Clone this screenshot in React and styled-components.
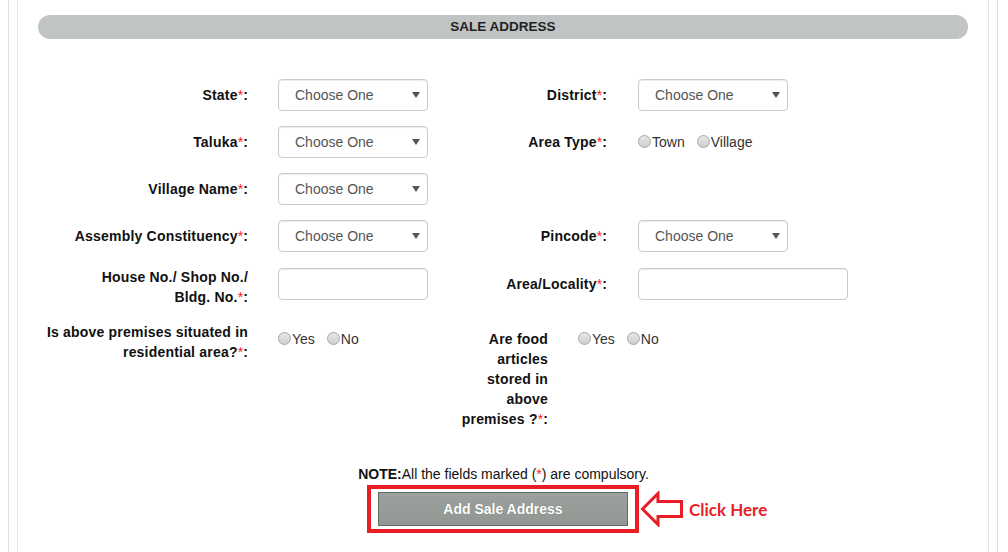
import styled, { createGlobalStyle } from 'styled-components';

const GlobalStyle = createGlobalStyle`
  html, body {
    margin: 0;
    padding: 0;
    background: #ffffff;
    font-family: "Liberation Sans", Arial, sans-serif;
  }
`;

export default function App() {
  return (
    <>
      <GlobalStyle />
      <Outer>
        <Panel>
          <Header>SALE ADDRESS</Header>

          <Form>
            <Row>
              <Field>
                <Label>State<Req>*</Req>:</Label>
                <Choose />
              </Field>
              <Field right>
                <Label right>District<Req>*</Req>:</Label>
                <Choose />
              </Field>
            </Row>

            <Row>
              <Field>
                <Label>Taluka<Req>*</Req>:</Label>
                <Choose />
              </Field>
              <Field right>
                <Label right>Area Type<Req>*</Req>:</Label>
                <Radios names={['Town', 'Village']} group="areatype" />
              </Field>
            </Row>

            <Row>
              <Field>
                <Label>Village Name<Req>*</Req>:</Label>
                <Choose />
              </Field>
            </Row>

            <Row>
              <Field>
                <Label>Assembly Constituency<Req>*</Req>:</Label>
                <Choose />
              </Field>
              <Field right>
                <Label right>Pincode<Req>*</Req>:</Label>
                <Choose />
              </Field>
            </Row>

            <Row top>
              <Field top>
                <Label>House No./ Shop No./<br />Bldg. No.<Req>*</Req>:</Label>
                <TextInput type="text" />
              </Field>
              <Field right>
                <Label right>Area/Locality<Req>*</Req>:</Label>
                <TextInput type="text" wide />
              </Field>
            </Row>

            <Row top>
              <Field top>
                <Label>Is above premises situated in residential area?<Req>*</Req>:</Label>
                <Radios names={['Yes', 'No']} group="residential" padded />
              </Field>
              <Field right top>
                <Label right narrow>Are food articles stored in above premises ?<Req>*</Req>:</Label>
                <Radios names={['Yes', 'No']} group="food" padded />
              </Field>
            </Row>
          </Form>

          <Note>
            <b>NOTE:</b>All the fields marked (<Req>*</Req>) are compulsory.
          </Note>

          <Actions>
            <span />
            <Highlight>
              <AddButton type="button">Add Sale Address</AddButton>
            </Highlight>
            <Pointer>
              <svg width="44" height="36" viewBox="0 0 44 36">
                <path
                  d="M2.5 18 L18 2.5 L18 10.5 L41.5 10.5 L41.5 25.5 L18 25.5 L18 33.5 Z"
                  fill="none"
                  stroke="#e81d25"
                  strokeWidth="3"
                  strokeLinejoin="miter"
                />
              </svg>
              <ClickText>Click Here</ClickText>
            </Pointer>
          </Actions>
        </Panel>
      </Outer>
    </>
  );
}

function Choose() {
  return (
    <SelectWrap>
      <Select defaultValue="">
        <option value="">Choose One</option>
      </Select>
      <Caret width="8" height="6" viewBox="0 0 8 6">
        <path d="M0 0 L8 0 L4 6 Z" fill="#555" />
      </Caret>
    </SelectWrap>
  );
}

function Radios({ names, group, padded }) {
  return (
    <RadioGroup padded={padded ? 1 : 0}>
      {names.map((n) => (
        <RadioLabel key={n}>
          <Radio type="radio" name={group} />
          {n}
        </RadioLabel>
      ))}
    </RadioGroup>
  );
}

const Outer = styled.div`
  margin: 0 10px 0 8px;
  min-height: 552px;
  border-left: 1px solid #dedede;
  border-right: 1px solid #dedede;
`;

const Panel = styled.div`
  margin: 0 8px;
  min-height: 552px;
  padding: 15px 20px 20px;
  border-left: 1px solid #e4e4e4;
  border-right: 1px solid #e4e4e4;
`;

const Header = styled.div`
  height: 24px;
  line-height: 24px;
  background: #c1c4c4;
  border-radius: 12px;
  text-align: center;
  font-size: 13.5px;
  font-weight: bold;
  color: #1f1f1f;
`;

const Form = styled.div`
  margin-top: 40px;
`;

const Row = styled.div`
  display: flex;
  align-items: ${(p) => (p.top ? 'flex-start' : 'center')};
  margin-bottom: 15px;
  min-height: 32px;
`;

const Field = styled.div`
  display: flex;
  align-items: ${(p) => (p.top ? 'flex-start' : 'center')};
  width: ${(p) => (p.right ? 'auto' : '420px')};
`;

const Label = styled.label`
  width: ${(p) => (p.narrow ? '90px' : p.right ? '149px' : '210px')};
  margin-right: ${(p) => (p.right && !p.narrow ? '31px' : '30px')};
  padding-top: ${(p) => (p.narrow ? '7px' : '0')};
  text-align: right;
  font-size: 14px;
  font-weight: bold;
  line-height: 20px;
  letter-spacing: 0.2px;
  color: #111;
`;

const Req = styled.span`
  color: #ff1a1a;
  font-weight: normal;
  letter-spacing: 0;
`;

const SelectWrap = styled.div`
  position: relative;
  width: 150px;
  height: 32px;
`;

const Select = styled.select`
  appearance: none;
  -webkit-appearance: none;
  width: 100%;
  height: 100%;
  box-sizing: border-box;
  padding: 0 24px 0 16px;
  border: 1px solid #cccccc;
  border-radius: 4px;
  background: #fff;
  box-shadow: inset 0 1px 1px rgba(0, 0, 0, 0.075);
  font-family: "Liberation Sans", Arial, sans-serif;
  font-size: 14px;
  color: #555;
`;

const Caret = styled.svg`
  position: absolute;
  right: 8px;
  top: 13px;
  pointer-events: none;
`;

const TextInput = styled.input`
  width: ${(p) => (p.wide ? '210px' : '150px')};
  height: 32px;
  margin-top: 1px;
  box-sizing: border-box;
  border: 1px solid #cccccc;
  border-radius: 4px;
  box-shadow: inset 0 1px 1px rgba(0, 0, 0, 0.075);
  padding: 0 12px;
  font-size: 14px;
`;

const RadioGroup = styled.div`
  display: flex;
  gap: 12px;
  padding-top: ${(p) => (p.padded ? '7px' : '0')};
`;

const RadioLabel = styled.label`
  display: flex;
  align-items: center;
  font-size: 14px;
  line-height: 20px;
  color: #333;
`;

const Radio = styled.input`
  appearance: none;
  -webkit-appearance: none;
  margin: 0 1px 2px 0;
  width: 13px;
  height: 13px;
  border-radius: 50%;
  border: 1px solid #a7a7a7;
  background: linear-gradient(#e6e6e6, #cfcfcf);
  box-sizing: border-box;
`;

const Note = styled.div`
  margin-top: 36px;
  text-align: center;
  font-size: 14px;
  line-height: 18px;
  color: #111;
  padding-left: 1px;
`;

const Actions = styled.div`
  display: grid;
  grid-template-columns: 1fr auto 1fr;
  align-items: center;
  margin-top: 2px;
`;

const Highlight = styled.div`
  border: 4px solid #e81d25;
  padding: 3px 7px;
  display: flex;
`;

const AddButton = styled.button`
  width: 250px;
  height: 34px;
  border: 1px solid #5e6d64;
  background: linear-gradient(#9da19e, #939794);
  color: #ffffff;
  font-family: "Liberation Sans", Arial, sans-serif;
  font-size: 14px;
  font-weight: bold;
  text-shadow: 0 0 1px rgba(0, 0, 0, 0.3);
`;

const Pointer = styled.div`
  display: flex;
  align-items: center;
  gap: 5px;
  padding-left: 1px;
`;

const ClickText = styled.span`
  font-family: Lato, "Open Sans", sans-serif;
  font-weight: bold;
  font-size: 17px;
  color: #e81d25;
`;
